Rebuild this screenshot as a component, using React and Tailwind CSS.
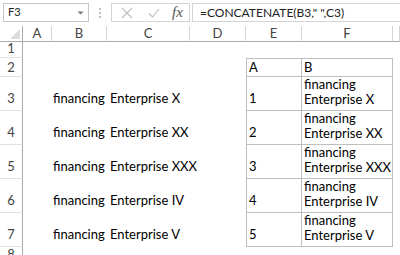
import React from 'react'

const cols = [
  ['A', 'w-[29px]'],
  ['B', 'w-[55px]'],
  ['C', 'w-[83px]'],
  ['D', 'w-[56px]'],
  ['E', 'w-[56px]'],
  ['F', 'w-[91px]'],
  ['', 'w-[7px]'],
]
const names = ['Enterprise X', 'Enterprise XX', 'Enterprise XXX', 'Enterprise IV', 'Enterprise V']

function RowHead({ n, pb = 'pb-[4px]' }) {
  return (
    <div className={`w-[23px] shrink-0 border-r border-b border-r-[#ababab] border-b-[#e1e1e1] flex items-end justify-center ${pb} text-[13px] leading-[15px] text-[#444]`}>
      {n}
    </div>
  )
}

function Cell({ children, className = '' }) {
  return (
    <div className={`shrink-0 flex flex-col justify-end text-[13px] leading-[15px] text-black whitespace-nowrap ${className}`}>
      {children}
    </div>
  )
}

export default function App() {
  return (
    <div className="w-[400px] h-[255px] overflow-hidden bg-white font-['Lato',sans-serif]">
      {/* formula bar */}
      <div className="flex items-start h-[26px] pt-[3px]">
        <div className="ml-[3px] w-[86px] h-[19px] border border-[#c6c6c6] flex items-center justify-between pl-[4px] pr-[4px] text-[11px] text-[#222]">
          <span>F3</span>
          <svg width="7" height="4" viewBox="0 0 7 4"><path d="M0.5 0.5 L3.5 3.5 L6.5 0.5 Z" fill="#777" /></svg>
        </div>
        <div className="w-[22px] h-[19px] flex flex-col items-center justify-center gap-[2px]">
          <span className="w-[2px] h-[2px] bg-[#c0c0c0]" />
          <span className="w-[2px] h-[2px] bg-[#c0c0c0]" />
          <span className="w-[2px] h-[2px] bg-[#c0c0c0]" />
        </div>
        <div className="w-[79px] h-[19px] border border-[#d4d4d4] flex items-center">
          <svg className="ml-[9px]" width="12" height="12" viewBox="0 0 12 12">
            <path d="M1 1 L11 11 M11 1 L1 11" stroke="#bdbdbd" strokeWidth="1.1" fill="none" />
          </svg>
          <svg className="ml-[15px]" width="12" height="10" viewBox="0 0 12 10">
            <path d="M1 5.5 L4.5 9 L11 1" stroke="#bdbdbd" strokeWidth="1.1" fill="none" />
          </svg>
          <span className="ml-[12px] font-['Liberation_Serif',serif] italic text-[15px] leading-none text-[#555]">fx</span>
        </div>
        <div className="ml-[2px] flex-1 h-[19px] border border-r-0 border-[#d4d4d4] flex items-center pl-[7px] text-[12px] text-[#222] whitespace-nowrap">
          =CONCATENATE(B3," ",C3)
        </div>
      </div>

      {/* column headers */}
      <div className="flex h-[16px]">
        <div className="w-[23px] shrink-0 border-r border-b border-r-[#ababab] border-b-[#ababab] flex items-end justify-end p-[2px]">
          <svg width="10" height="10" viewBox="0 0 10 10"><path d="M10 0 L10 10 L0 10 Z" fill="#dcdcdc" /></svg>
        </div>
        {cols.map(([c, w], i) => (
          <div key={i} className={`${w} shrink-0 border-r border-b border-r-[#d4d4d4] border-b-[#ababab] flex items-end justify-center pb-[0px] text-[13px] leading-[15px] text-[#444]`}>
            {c}
          </div>
        ))}
      </div>

      {/* row 1 */}
      <div className="flex h-[16px]">
        <RowHead n={1} pb="pb-[1px]" />
      </div>

      {/* row 2 */}
      <div className="flex h-[19px]">
        <RowHead n={2} pb="pb-[1px]" />
        <div className="w-[223px] shrink-0" />
        <Cell className="w-[56px] border border-[#bfbfbf] pl-[2px] pb-[1px]">A</Cell>
        <Cell className="w-[91px] border-t border-r border-b border-[#bfbfbf] pl-[2px] pb-[1px]">B</Cell>
      </div>

      {names.map((name, i) => (
        <div key={i} className="flex h-[34px]">
          <RowHead n={i + 3} />
          <div className="w-[29px] shrink-0" />
          <Cell className="w-[55px] pl-px pb-[5px]">financing</Cell>
          <Cell className="w-[83px] pl-[3px] pb-[5px]">{name}</Cell>
          <div className="w-[56px] shrink-0" />
          <Cell className="w-[56px] border-l border-r border-b border-[#bfbfbf] pl-[2px] pb-[4px]">{i + 1}</Cell>
          <Cell className="w-[91px] border-r border-b border-[#bfbfbf] pl-[2px] pb-[3px]">
            <span>financing</span>
            <span>{name}</span>
          </Cell>
        </div>
      ))}

      <div className="flex h-[20px]">
        <RowHead n={8} />
      </div>
    </div>
  )
}
